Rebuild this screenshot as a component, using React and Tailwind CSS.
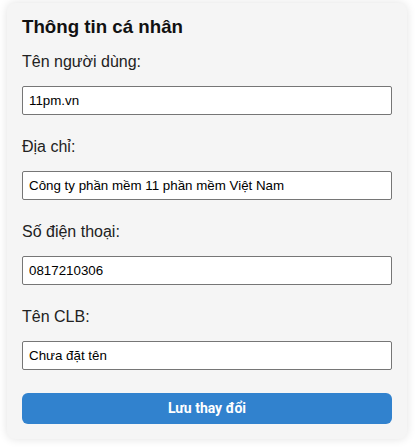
import React from "react";

const fields = [
  { label: "Tên người dùng:", value: "11pm.vn" },
  { label: "Địa chỉ:", value: "Công ty phần mềm 11 phần mềm Việt Nam" },
  { label: "Số điện thoại:", value: "0817210306" },
  { label: "Tên CLB:", value: "Chưa đặt tên" },
];

export default function App() {
  return (
    <div className="min-h-[448px] bg-white pl-[7px] pt-[3px]" style={{ fontFamily: '"Liberation Sans", Arial, sans-serif' }}>
      <div className="w-[400px] rounded-[8px] bg-[#f5f5f5] px-[15px] pt-[12px] pb-[15px] shadow-[0_0_10px_rgba(0,0,0,0.12)]">
        <h3 className="mb-[15px] text-[18.72px] font-bold leading-[23px] text-[#111]">Thông tin cá nhân</h3>
        {fields.map((f) => (
          <div key={f.label} className="mb-[23px] flex flex-col">
            <label className="mb-[15px] block text-[16px] leading-[18px] text-[#222]">{f.label}</label>
            <input
              readOnly
              value={f.value}
              className="h-[29px] w-[370px] rounded-[2px] border border-[#767676] bg-white pl-[6px] text-[13.333px] text-black outline-none"
              style={{ fontFamily: '"Liberation Sans", Arial, sans-serif' }}
            />
          </div>
        ))}
        <button
          className="mt-[1px] block h-[31px] w-[370px] rounded-[6px] bg-[#3182ce] text-[14px] font-bold text-white"
          style={{ fontFamily: 'Roboto, "Liberation Sans", sans-serif' }}
        >
          Lưu thay đổi
        </button>
      </div>
    </div>
  );
}
